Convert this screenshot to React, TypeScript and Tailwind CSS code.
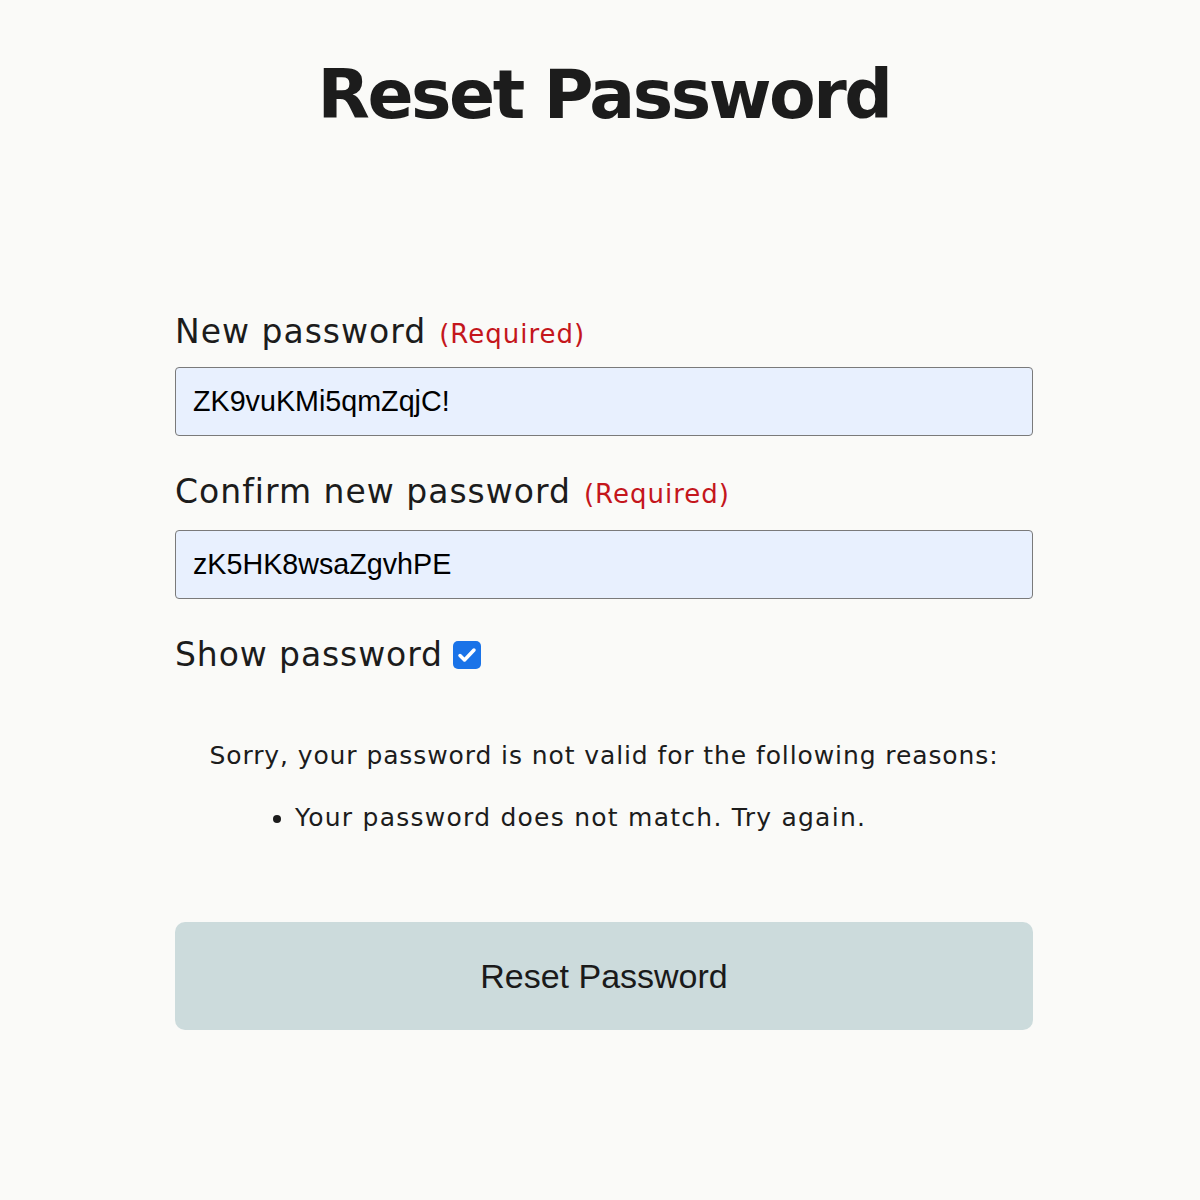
import React from "react";

export default function App() {
  const font = { fontFamily: '"DejaVu Sans", sans-serif' };
  const arial = { fontFamily: '"Liberation Sans", Arial, sans-serif' };
  return (
    <div className="w-[1200px] h-[1200px] bg-[#fafaf8] text-[#1c1c1c]" style={font}>
      <div className="pl-[175px] w-[1033px] flex flex-col">
        <h1 className="pt-[53px] text-center text-[68px] leading-[84px] font-bold tracking-[-2.5px] whitespace-nowrap">
          Reset Password
        </h1>
        <div className="mt-[175px] flex items-baseline gap-[13px] whitespace-nowrap">
          <span className="text-[33px] leading-[40px] tracking-[1px]">New password</span>
          <span className="text-[26px] tracking-[1px] text-[#c4161c]">(Required)</span>
        </div>
        <div className="mt-[13px] h-[69px] rounded-[4px] border-[1.5px] border-[#7a7a7a] bg-[#e8f0fe] flex items-center px-[17px] text-[28.7px] text-black" style={arial}>
          ZK9vuKMi5qmZqjC!
        </div>
        <div className="mt-[36px] flex items-baseline gap-[13px] whitespace-nowrap">
          <span className="text-[33px] leading-[40px] tracking-[1px]">Confirm new password</span>
          <span className="text-[26px] tracking-[1px] text-[#c4161c]">(Required)</span>
        </div>
        <div className="mt-[16px] h-[69px] rounded-[4px] border-[1.5px] border-[#7a7a7a] bg-[#e8f0fe] flex items-center px-[17px] text-[28.7px] text-black" style={arial}>
          zK5HK8wsaZgvhPE
        </div>
        <div className="mt-[36px] flex items-center gap-[10px] whitespace-nowrap">
          <span className="text-[33px] leading-[40px] tracking-[0.9px]">Show password</span>
          <span className="w-[28px] h-[28px] rounded-[5px] bg-[#1a73e8] flex items-center justify-center">
            <svg width="28" height="28" viewBox="0 0 28 28" fill="none">
              <path d="M7 14.5l4.5 4.5 9.5-10" stroke="white" strokeWidth="3.5" strokeLinecap="round" strokeLinejoin="round" />
            </svg>
          </span>
        </div>
        <p className="mt-[64px] text-center text-[25px] leading-[34px] tracking-[0.9px] whitespace-nowrap">
          Sorry, your password is not valid for the following reasons:
        </p>
        <ul className="mt-[28px] pl-[100px] list-disc text-[25px] leading-[34px] tracking-[1.25px]">
          <li className="ml-[20px]">Your password does not match. Try again.</li>
        </ul>
        <button className="mt-[87px] h-[108px] rounded-[10px] bg-[#ccdbdc] text-[34px] text-[#1a1a1a]" style={arial}>
          Reset Password
        </button>
      </div>
    </div>
  );
}
